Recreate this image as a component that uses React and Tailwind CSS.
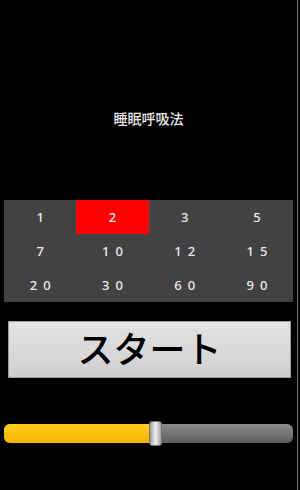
import { useState } from "react";

const minutes = [1, 2, 3, 5, 7, 10, 12, 15, 20, 30, 60, 90];

export default function App() {
  const [selected, setSelected] = useState(2);
  const [value] = useState(50);

  return (
    <div className="flex w-[300px] h-[490px] bg-black overflow-hidden" style={{ fontFamily: '"Noto Sans", "Noto Sans CJK JP", sans-serif' }}>
      <div className="flex flex-col w-[297px]">
        <p className="pt-[111px] text-center text-[14px] leading-[16px] font-medium text-[#e6e6e6]">睡眠呼吸法</p>

        <div className="mt-[73px] mx-[4px] grid grid-cols-4 bg-[#424242]">
          {minutes.map((m) => (
            <button
              key={m}
              type="button"
              onClick={() => setSelected(m)}
              className={
                "h-[34px] flex items-center justify-center gap-[6px] text-[13px] leading-none font-medium text-[#ececec] " +
                (selected === m ? "bg-[#ff0000]" : "")
              }
            >
              {String(m).split("").map((d, i) => (
                <span key={i}>{d}</span>
              ))}
            </button>
          ))}
        </div>

        <button
          type="button"
          className="mt-[19px] ml-[8px] w-[283px] h-[57px] flex items-center justify-center border border-[#9a9a9a] bg-gradient-to-b from-[#e4e4e4] to-[#cfcfcf] text-black text-[36px] leading-none font-medium"
        >
          スタート
        </button>

        <div className="mt-[43px] mx-[4px] h-[25px] relative flex items-center">
          <div className="w-full h-[19px] rounded-[6px] bg-gradient-to-b from-[#8c8c8c] to-[#5e5e5e] overflow-hidden">
            <div className="h-full bg-gradient-to-b from-[#ffce1a] to-[#f4b400]" style={{ width: `${value}%` }} />
          </div>
          <div className="absolute top-0 left-[145px] w-[13px] h-[25px] rounded-[3px] border border-[#777] bg-gradient-to-r from-[#9a9a9a] via-[#f0f0f0] to-[#a0a0a0]" />
        </div>
      </div>
      <div className="w-[1px] h-full bg-[#737373]" />
    </div>
  );
}
